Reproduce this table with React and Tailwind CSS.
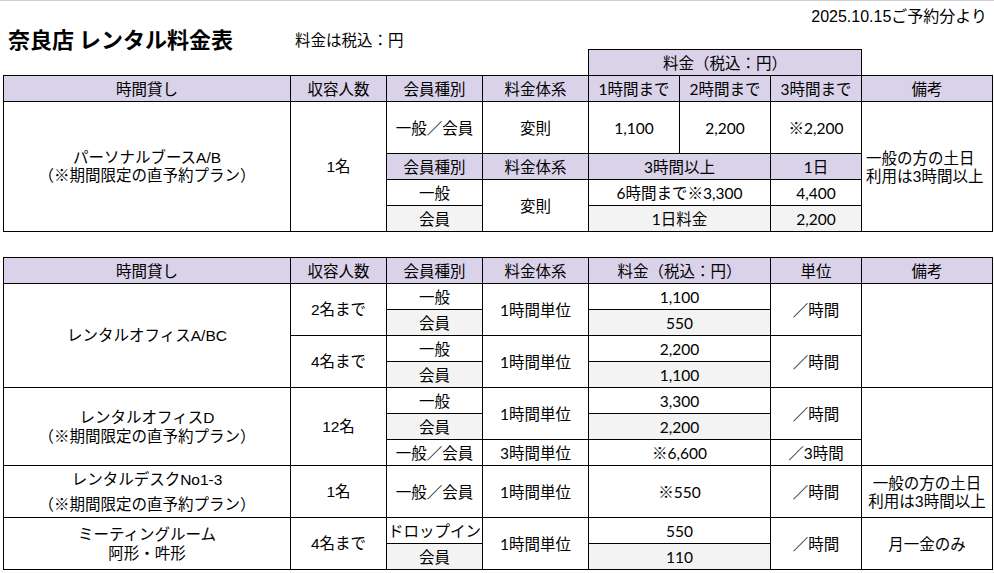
import React from "react";

const V = {
  lav: "border border-black bg-[#d9d2e9] text-center align-middle p-0 whitespace-nowrap",
  w: "border border-black bg-white text-center align-middle p-0 whitespace-nowrap",
  g: "border border-black bg-[#f3f3f3] text-center align-middle p-0 whitespace-nowrap",
  note: "border border-black bg-white text-left align-middle p-0 pl-[4px] whitespace-nowrap",
  none: "border-0 p-0",
};
const F = {
  a: "font-['Liberation_Sans','Noto_Sans_CJK_JP',sans-serif]",
  c: "font-['Lato','Noto_Sans_CJK_JP',sans-serif]",
};

function Td({ v = "w", f = "c", extra = "", children, ...rest }) {
  return (
    <td className={`${V[v]} ${F[f]} ${extra}`} {...rest}>
      {children}
    </td>
  );
}

function Cols() {
  return (
    <colgroup>
      <col className="w-[287px]" />
      <col className="w-[96px]" />
      <col className="w-[96px]" />
      <col className="w-[106px]" />
      <col className="w-[91px]" />
      <col className="w-[91px]" />
      <col className="w-[91px]" />
      <col className="w-[131px]" />
    </colgroup>
  );
}

const tableCls =
  "table-fixed border-collapse ml-[3px] w-[989px] text-[15.5px] leading-[18px] text-black";

export default function App() {
  return (
    <div className="w-[994px] h-[573px] bg-white border-t border-[#d0d0d0] overflow-hidden text-black">
      <div className="h-[23px] pt-[8px] pr-[7px] text-right text-[16px] leading-none font-['Liberation_Sans','Noto_Sans_CJK_JP',sans-serif]">
        2025.10.15ご予約分より
      </div>
      <div className="h-[25px] flex items-end font-['Noto_Sans_CJK_JP',sans-serif]">
        <div className="ml-[8px] w-[287px] text-[22px] font-bold leading-none">
          奈良店 レンタル料金表
        </div>
        <div className="text-[15.5px] leading-none mb-[2px]">料金は税込：円</div>
      </div>

      <table className={tableCls}>
        <Cols />
        <tbody>
          <tr className="h-[26px]">
            <td colSpan={4} className={V.none}></td>
            <Td v="lav" colSpan={3}>料金（税込：円）</Td>
            <td className={V.none}></td>
          </tr>
          <tr className="h-[26px]">
            <Td v="lav">時間貸し</Td>
            <Td v="lav">収容人数</Td>
            <Td v="lav">会員種別</Td>
            <Td v="lav">料金体系</Td>
            <Td v="lav">1時間まで</Td>
            <Td v="lav">2時間まで</Td>
            <Td v="lav">3時間まで</Td>
            <Td v="lav">備考</Td>
          </tr>
          <tr className="h-[52px]">
            <Td rowSpan={4} f="a">
              パーソナルブースA/B
              <br />
              （※期間限定の直予約プラン）
            </Td>
            <Td rowSpan={4} f="a">1名</Td>
            <Td>一般／会員</Td>
            <Td>変則</Td>
            <Td>1,100</Td>
            <Td>2,200</Td>
            <Td>※2,200</Td>
            <Td v="note" rowSpan={4}>
              一般の方の土日
              <br />
              利用は3時間以上
            </Td>
          </tr>
          <tr className="h-[26px]">
            <Td v="lav">会員種別</Td>
            <Td v="lav">料金体系</Td>
            <Td v="lav" colSpan={2}>3時間以上</Td>
            <Td v="lav">1日</Td>
          </tr>
          <tr className="h-[26px]">
            <Td>一般</Td>
            <Td rowSpan={2}>変則</Td>
            <Td colSpan={2}>6時間まで※3,300</Td>
            <Td>4,400</Td>
          </tr>
          <tr className="h-[26px]">
            <Td v="g">会員</Td>
            <Td v="g" colSpan={2}>1日料金</Td>
            <Td v="g">2,200</Td>
          </tr>
        </tbody>
      </table>

      <table className={`${tableCls} mt-[25px]`}>
        <Cols />
        <tbody>
          <tr className="h-[26px]">
            <Td v="lav">時間貸し</Td>
            <Td v="lav">収容人数</Td>
            <Td v="lav">会員種別</Td>
            <Td v="lav">料金体系</Td>
            <Td v="lav" colSpan={2}>料金（税込：円）</Td>
            <Td v="lav">単位</Td>
            <Td v="lav">備考</Td>
          </tr>
          <tr className="h-[26px]">
            <Td rowSpan={4} f="a">レンタルオフィスA/BC</Td>
            <Td rowSpan={2} f="a">2名まで</Td>
            <Td>一般</Td>
            <Td rowSpan={2}>1時間単位</Td>
            <Td colSpan={2}>1,100</Td>
            <Td rowSpan={2}>／時間</Td>
            <Td rowSpan={4}></Td>
          </tr>
          <tr className="h-[26px]">
            <Td v="g">会員</Td>
            <Td v="g" colSpan={2}>550</Td>
          </tr>
          <tr className="h-[26px]">
            <Td rowSpan={2} f="a">4名まで</Td>
            <Td>一般</Td>
            <Td rowSpan={2}>1時間単位</Td>
            <Td colSpan={2}>2,200</Td>
            <Td rowSpan={2}>／時間</Td>
          </tr>
          <tr className="h-[26px]">
            <Td v="g">会員</Td>
            <Td v="g" colSpan={2}>1,100</Td>
          </tr>
          <tr className="h-[26px]">
            <Td rowSpan={3} f="a" extra="leading-[19px]">
              レンタルオフィスD
              <br />
              （※期間限定の直予約プラン）
            </Td>
            <Td rowSpan={3} f="a">12名</Td>
            <Td>一般</Td>
            <Td rowSpan={2}>1時間単位</Td>
            <Td colSpan={2}>3,300</Td>
            <Td rowSpan={2}>／時間</Td>
            <Td rowSpan={3}></Td>
          </tr>
          <tr className="h-[26px]">
            <Td v="g">会員</Td>
            <Td v="g" colSpan={2}>2,200</Td>
          </tr>
          <tr className="h-[26px]">
            <Td>一般／会員</Td>
            <Td>3時間単位</Td>
            <Td colSpan={2}>※6,600</Td>
            <Td>／3時間</Td>
          </tr>
          <tr className="h-[52px]">
            <Td f="a" extra="leading-[25px]">
              レンタルデスクNo1-3
              <br />
              （※期間限定の直予約プラン）
            </Td>
            <Td f="a">1名</Td>
            <Td>一般／会員</Td>
            <Td>1時間単位</Td>
            <Td colSpan={2}>※550</Td>
            <Td>／時間</Td>
            <Td>
              一般の方の土日
              <br />
              利用は3時間以上
            </Td>
          </tr>
          <tr className="h-[26px]">
            <Td rowSpan={2} f="a" extra="leading-[19px]">
              ミーティングルーム
              <br />
              阿形・吽形
            </Td>
            <Td rowSpan={2} f="a">4名まで</Td>
            <Td>ドロップイン</Td>
            <Td rowSpan={2}>1時間単位</Td>
            <Td colSpan={2}>550</Td>
            <Td rowSpan={2}>／時間</Td>
            <Td rowSpan={2}>月一金のみ</Td>
          </tr>
          <tr className="h-[26px]">
            <Td v="g">会員</Td>
            <Td v="g" colSpan={2}>110</Td>
          </tr>
        </tbody>
      </table>
    </div>
  );
}
